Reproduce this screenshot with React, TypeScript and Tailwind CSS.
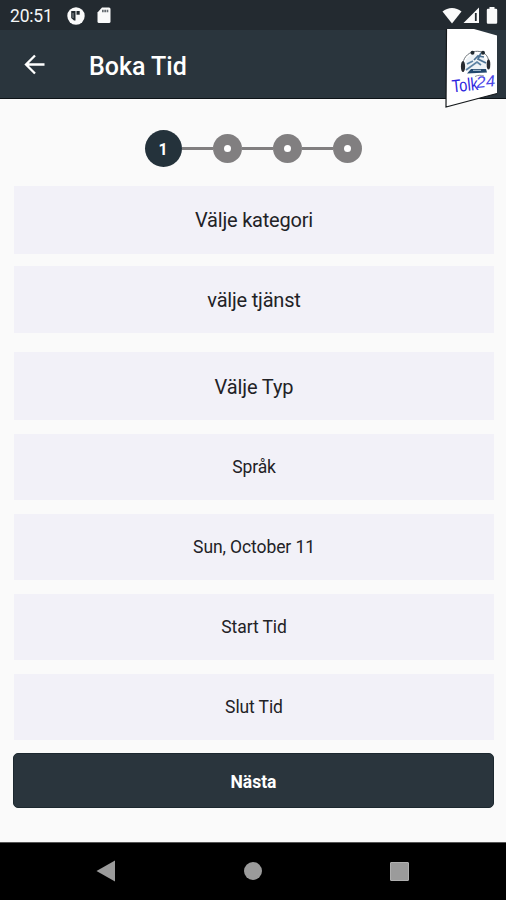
import React from 'react';
import clsx from 'clsx';

const fields = [
    { label: 'Välje kategori', box: 'h-[68px] text-[20px] tracking-[-0.2px]' },
    { label: 'välje tjänst', box: 'mt-3 h-[67px] text-[20px] tracking-[-0.2px]' },
    { label: 'Välje Typ', box: 'mt-[19px] h-[68px] pt-px text-[20px] tracking-[-0.1px]' },
    { label: 'Språk', box: 'mt-[14px] h-[66px] pt-px text-[17.5px] tracking-[-0.1px]' },
    { label: 'Sun, October 11', box: 'mt-[14px] h-[66px] pt-px text-[17.5px] tracking-[-0.1px]' },
    { label: 'Start Tid', box: 'mt-[14px] h-[66px] pt-px text-[17.5px] tracking-[-0.1px]' },
    { label: 'Slut Tid', box: 'mt-[14px] h-[66px] pt-px text-[17.5px] tracking-[-0.1px]' },
];

function StatusBar() {
    return (
        <div className="flex h-[30px] items-center bg-[#232a30] pl-[10px] pr-[8px] pt-px text-[#f4f6f7]">
            <span className="w-[43px] pt-0.5 text-[17.5px] leading-none tracking-[-0.2px]">20:51</span>
            <svg className="ml-[14px]" width="18" height="18" viewBox="0 0 18 18">
                <circle cx="9" cy="9" r="8.7" fill="#fafafa" />
                <path d="M4.200 4h4.300v9.500H7L4.200 11z" fill="#232a30" />
                <path d="M9.500 4h3.200v3.700H9.500z" fill="#232a30" />
                <path d="M6 6v5" stroke="#8d9296" strokeWidth="1" />
            </svg>
            <svg className="ml-[12px]" width="14" height="17" viewBox="0 0 14 17">
                <path d="M5 .5h7A1.5 1.5 0 0 1 13.500 2v12.500a1.500 1.500 0 0 1-1.500 1.500H2A1.500 1.500 0 0 1 .5 14.500V5.500z" fill="#fafafa" />
                <path d="M5 4h6.500" stroke="#666c71" strokeWidth="2.500" strokeDasharray="1.700 .6" />
            </svg>
            <div className="ml-auto flex items-center">
                <svg width="20" height="17" viewBox="0 0 20 17">
                    <path d="M10 16.500L.5 4.500C6-.3 14-.3 19.500 4.500z" fill="#fafafa" />
                </svg>
                <svg className="ml-px" width="17" height="17" viewBox="0 0 17 17">
                    <path d="M16 .5V16H.5z" fill="#fafafa" />
                    <path d="M12.800 6v8" stroke="#232a30" strokeWidth="1.800" />
                </svg>
                <svg className="ml-[6px]" width="12" height="17" viewBox="0 0 12 17">
                    <path d="M3.500 0h5v1.800h1.500a1.200 1.200 0 0 1 1.200 1.200v12.500a1.200 1.200 0 0 1-1.200 1.200H2A1.200 1.200 0 0 1 .8 15.500V3A1.200 1.200 0 0 1 2 1.800h1.500z" fill="#fafafa" />
                </svg>
            </div>
        </div>
    );
}

function Logo() {
    return (
        <svg className="absolute left-[445px] top-[-2px]" width="54" height="82" viewBox="0 0 54 82">
            <path d="M1.500 1H29L52 7.500V65.500L1 79z" fill="#fff" />
            <path d="M1.500 1L1 79L52 65.500" fill="none" stroke="#15191c" strokeWidth="1.200" />
            {/* Globe with headset */}
            <path d="M18 35C20 21 41 19 43.500 32" fill="none" stroke="#6d747a" strokeWidth="1" />
            <path d="M20 42c-2-7 2-15 9-16 8-1 13 5 13 13-4 5-17 7-22 3z" fill="#eef3f7" />
            <path d="M29 32l4-4 6 1M36 25l-3 6 8 4" fill="none" stroke="#4c7294" strokeWidth="1.700" />
            <path d="M21 42l11-8 4 3M22 36l6-3" fill="none" stroke="#5d83a4" strokeWidth="1.700" />
            <path d="M22 45.500l4-4.500h15l1 3.500z" fill="#23496f" />
            <path d="M28 42.300h8" stroke="#b4cbdc" strokeWidth="1" />
            <ellipse cx="18" cy="38.500" rx="2.100" ry="5.500" fill="#282b30" />
            <ellipse cx="43.500" cy="36.500" rx="1.800" ry="5" fill="#282b30" />
            <circle cx="27.500" cy="24.800" r="2" fill="#202a31" />
            <circle cx="38" cy="24.800" r="2" fill="#202a31" />
            <path d="M30 48.500c3-1.500 6-1.500 9-.5" fill="none" stroke="#8f979b" strokeWidth="1" />
            <g transform="rotate(-6 7 64)" fontFamily="Liberation Sans, sans-serif">
                <text x="7.500" y="64.500" fontSize="18" textLength="26" lengthAdjust="spacingAndGlyphs" fill="#2b24de">Tolk</text>
                <text x="32" y="62.500" fontSize="16" fontStyle="italic" textLength="19" lengthAdjust="spacingAndGlyphs" fill="#4a45e8">24</text>
            </g>
        </svg>
    );
}

function Header() {
    return (
        <header className="relative flex h-[69px] items-center border-b border-[#0d1317] bg-[#2a353d] pl-[24px]">
            <svg width="21" height="21" viewBox="0 0 21 21" fill="none" stroke="#fff" strokeWidth="2.300">
                <path d="M20.500 10.500H2M11 1.500l-9 9 9 9" />
            </svg>
            <h1 className="ml-[44px] pt-[5px] text-[25px] font-medium leading-none text-white">Boka Tid</h1>
            <Logo />
        </header>
    );
}

function Stepper() {
    return (
        <div className="-ml-0.5 flex h-[37px] items-center justify-center">
            <div className="flex size-[37px] items-center justify-center rounded-full bg-[#24323b] pt-0.5 text-[16px] font-bold text-white">1</div>
            {[2, 3, 4].map((step) => (
                <React.Fragment key={step}>
                    <div className="h-[3px] w-[31px] bg-[#817f80]" />
                    <div className="flex size-[29px] items-center justify-center rounded-full bg-[#817f80]">
                        <div className="size-[7px] rounded-full bg-white" />
                    </div>
                </React.Fragment>
            ))}
        </div>
    );
}

function NavBar() {
    return (
        <nav className="flex h-[58px] items-center justify-between border-t border-[#555] bg-black px-[96px] pb-px">
            <svg width="19" height="22" viewBox="0 0 19 22">
                <path d="M19 .5v21L.5 11z" fill="#9b9b9b" />
            </svg>
            <div className="size-[18px] rounded-full bg-[#9b9b9b]" />
            <div className="mr-px size-[19px] rounded-[1px] border border-[#b0b0b0] bg-[#9b9b9b]" />
        </nav>
    );
}

export default function App() {
    return (
        <div className="flex h-[900px] w-[506px] flex-col overflow-hidden bg-[#fafafa] font-['Roboto',sans-serif]">
            <StatusBar />
            <Header />
            <main className="flex flex-1 flex-col pl-[14px] pr-3 pt-[31px]">
                <Stepper />
                <div className="mt-[19px] flex flex-col">
                    {fields.map((field) => (
                        <button key={field.label} className={clsx('flex items-center justify-center bg-[#f2f1f8] text-[#222226]', field.box)}>
                            {field.label}
                        </button>
                    ))}
                </div>
                <button className="-ml-px mt-[13px] h-[55px] rounded-[5px] border border-[#1c282f] bg-[#2a353d] pt-[3px] text-[17.5px] font-bold text-white">
                    Nästa
                </button>
            </main>
            <NavBar />
        </div>
    );
}
